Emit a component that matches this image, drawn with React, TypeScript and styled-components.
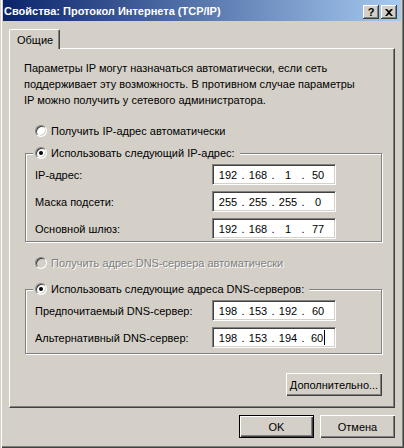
import React from 'react';
import styled, { createGlobalStyle } from 'styled-components';

// Классическая палитра Windows
const face = '#D4D0C8';
const light = '#FFFFFF';
const shadow = '#808080';
const dark = '#404040';

const GlobalStyle = createGlobalStyle`
  html, body {
    margin: 0;
    padding: 0;
    background: ${face};
  }
  * {
    box-sizing: border-box;
  }
  body {
    font-family: "Liberation Sans", Arial, sans-serif;
    font-size: 11px;
    color: #000;
  }
`;

const Window = styled.div`
  width: 404px;
  height: 448px;
  display: flex;
  flex-direction: column;
  padding: 0 3px 3px 3px;
  background: ${face};
  box-shadow: inset 1px 0 ${face}, inset 2px 0 ${light}, inset -1px -1px ${dark},
    inset -2px -2px ${shadow};
`;

const TitleBar = styled.div`
  height: 21px;
  display: flex;
  align-items: flex-start;
  padding: 0 4px 0 1px;
  background: linear-gradient(to right, #0a246a, #a6caf0);
`;

const Title = styled.div`
  flex: 1;
  padding-top: 5px;
  color: #fff;
  font-weight: bold;
  font-size: 11px;
  line-height: 13px;
  white-space: nowrap;
`;

const CaptionButton = styled.div<{ $gap?: boolean }>`
  width: 16px;
  height: 14px;
  margin-top: 5px;
  margin-left: ${(p) => (p.$gap ? '2px' : '0')};
  display: flex;
  align-items: center;
  justify-content: center;
  background: ${face};
  box-shadow: inset -1px -1px ${dark}, inset 1px 1px ${light}, inset -2px -2px ${shadow};
  font-weight: bold;
  font-size: 11px;
  line-height: 11px;
`;

const Body = styled.div`
  flex: 1;
  display: flex;
  flex-direction: column;
  padding: 8px 6px 7px 6px;
`;

const TabStrip = styled.div`
  display: flex;
  height: 20px;
  margin-bottom: -1px;
  position: relative;
  z-index: 1;
`;

const Tab = styled.div`
  width: 51px;
  height: 20px;
  padding: 3px 0 0 7px;
  background: ${face};
  border-top: 1px solid ${light};
  border-left: 1px solid ${light};
  border-right: 1px solid ${dark};
  border-radius: 2px 2px 0 0;
  box-shadow: inset -1px 0 ${shadow};
  line-height: 14px;
`;

const Panel = styled.div`
  height: 360px;
  display: flex;
  flex-direction: column;
  border-top: 1px solid ${light};
  border-left: 1px solid ${light};
  border-right: 1px solid ${dark};
  border-bottom: 1px solid ${dark};
  box-shadow: inset -1px -1px ${shadow};
  padding: 11px 12px 0 15px;
`;

const Description = styled.div`
  margin-left: -1px;
  line-height: 16px;
  white-space: nowrap;
`;

const RadioRow = styled.div<{ $disabled?: boolean; $top?: number }>`
  display: flex;
  align-items: center;
  height: 16px;
  margin-top: ${(p) => p.$top ?? 0}px;
  padding-left: ${(p) => (p.$top !== undefined ? 10 : 0)}px;
  gap: 4px;
  white-space: nowrap;
  color: ${(p) => (p.$disabled ? shadow : '#000')};
  text-shadow: ${(p) => (p.$disabled ? `1px 1px 0 ${light}` : 'none')};
`;

const RadioCircle = styled.span<{ $checked?: boolean; $disabled?: boolean }>`
  position: relative;
  width: 12px;
  height: 12px;
  flex: none;
  border-radius: 50%;
  border: 1px solid;
  border-color: ${shadow} ${light} ${light} ${shadow};
  background: ${(p) => (p.$disabled ? face : light)};
  box-shadow: inset 1px 1px ${dark}, inset -1px -1px ${face};

  &::after {
    content: '';
    display: ${(p) => (p.$checked ? 'block' : 'none')};
    position: absolute;
    left: 3px;
    top: 3px;
    width: 4px;
    height: 4px;
    border-radius: 50%;
    background: #000;
  }
`;

const GroupBox = styled.div<{ $top: number; $bottom: number }>`
  position: relative;
  margin-top: ${(p) => p.$top}px;
  display: flex;
  flex-direction: column;
  gap: 6px;
  padding: 10px 0 ${(p) => p.$bottom}px 9px;
  border: 1px solid ${shadow};
  box-shadow: inset 1px 1px ${light}, 1px 1px ${light};
`;

// Заголовок рамки лежит поверх её верхней линии
const Legend = styled.div`
  position: absolute;
  top: -9px;
  left: 7px;
  padding: 0 5px 0 2px;
  background: ${face};
`;

const FieldRow = styled.div`
  display: flex;
  align-items: center;
  height: 21px;
`;

const FieldLabel = styled.div`
  width: 177px;
  white-space: nowrap;
`;

const IpField = styled.div`
  width: 124px;
  height: 21px;
  display: flex;
  align-items: center;
  padding-left: 3px;
  background: ${light};
  border: 1px solid;
  border-color: ${shadow} ${light} ${light} ${shadow};
  box-shadow: inset 1px 1px ${dark}, inset -1px -1px ${face};
  line-height: 14px;
`;

const Octet = styled.span`
  width: 24px;
  text-align: center;
`;

const Dot = styled.span`
  width: 6px;
  text-align: center;
`;

const Caret = styled.span`
  display: inline-block;
  width: 1px;
  height: 15px;
  margin-left: 1px;
  vertical-align: -3px;
  background: #000;
`;

const PushButton = styled.div<{ $width: number; $default?: boolean }>`
  width: ${(p) => p.$width}px;
  height: 23px;
  display: flex;
  align-items: center;
  justify-content: center;
  background: ${face};
  white-space: nowrap;
  border: ${(p) => (p.$default ? '1px solid #000' : 'none')};
  box-shadow: ${(p) =>
    p.$default
      ? `inset 1px 1px ${light}, inset -1px -1px ${dark}, inset -2px -2px ${shadow}`
      : `inset 1px 1px ${light}, inset -1px -1px ${dark}, inset -2px -2px ${shadow}`};
`;

const AdvancedRow = styled.div`
  display: flex;
  justify-content: flex-end;
  margin-top: 19px;
`;

const ButtonRow = styled.div`
  display: flex;
  justify-content: flex-end;
  gap: 6px;
  margin-top: 7px;
`;

const CloseGlyph = () => (
  <svg width="8" height="7" viewBox="0 0 8 7">
    <path d="M0 0h2l2 2 2-2h2L5 3.5 8 7H6L4 5 2 7H0l3-3.5z" fill="#000" />
  </svg>
);

type IpProps = { value: string[]; caret?: boolean };

const IpAddress: React.FC<IpProps> = ({ value, caret }) => (
  <IpField>
    {value.map((octet, i) => (
      <React.Fragment key={i}>
        <Octet>
          {octet}
          {caret && i === value.length - 1 && <Caret />}
        </Octet>
        {i < value.length - 1 && <Dot>.</Dot>}
      </React.Fragment>
    ))}
  </IpField>
);

const ipRows = [
  { label: 'IP-адрес:', value: ['192', '168', '1', '50'] },
  { label: 'Маска подсети:', value: ['255', '255', '255', '0'] },
  { label: 'Основной шлюз:', value: ['192', '168', '1', '77'] },
];

const dnsRows = [
  { label: 'Предпочитаемый DNS-сервер:', value: ['198', '153', '192', '60'] },
  { label: 'Альтернативный DNS-сервер:', value: ['198', '153', '194', '60'], caret: true },
];

const App: React.FC = () => (
  <>
    <GlobalStyle />
    <Window>
      <TitleBar>
        <Title>Свойства: Протокол Интернета (TCP/IP)</Title>
        <CaptionButton>?</CaptionButton>
        <CaptionButton $gap>
          <CloseGlyph />
        </CaptionButton>
      </TitleBar>
      <Body>
        <TabStrip>
          <Tab>Общие</Tab>
        </TabStrip>
        <Panel>
          <Description>
            Параметры IP могут назначаться автоматически, если сеть
            <br />
            поддерживает эту возможность. В противном случае параметры
            <br />
            IP можно получить у сетевого администратора.
          </Description>

          <RadioRow $top={15}>
            <RadioCircle />
            Получить IP-адрес автоматически
          </RadioRow>

          <GroupBox $top={14} $bottom={2}>
            <Legend>
              <RadioRow>
                <RadioCircle $checked />
                Использовать следующий IP-адрес:
              </RadioRow>
            </Legend>
            {ipRows.map((row) => (
              <FieldRow key={row.label}>
                <FieldLabel>{row.label}</FieldLabel>
                <IpAddress value={row.value} />
              </FieldRow>
            ))}
          </GroupBox>

          <RadioRow $top={13} $disabled>
            <RadioCircle $disabled />
            Получить адрес DNS-сервера автоматически
          </RadioRow>

          <GroupBox $top={18} $bottom={5}>
            <Legend>
              <RadioRow>
                <RadioCircle $checked />
                Использовать следующие адреса DNS-серверов:
              </RadioRow>
            </Legend>
            {dnsRows.map((row) => (
              <FieldRow key={row.label}>
                <FieldLabel>{row.label}</FieldLabel>
                <IpAddress value={row.value} caret={row.caret} />
              </FieldRow>
            ))}
          </GroupBox>

          <AdvancedRow>
            <PushButton $width={96}>Дополнительно...</PushButton>
          </AdvancedRow>
        </Panel>
        <ButtonRow>
          <PushButton $width={75} $default>
            OK
          </PushButton>
          <PushButton $width={75}>Отмена</PushButton>
        </ButtonRow>
      </Body>
    </Window>
  </>
);

export default App;
